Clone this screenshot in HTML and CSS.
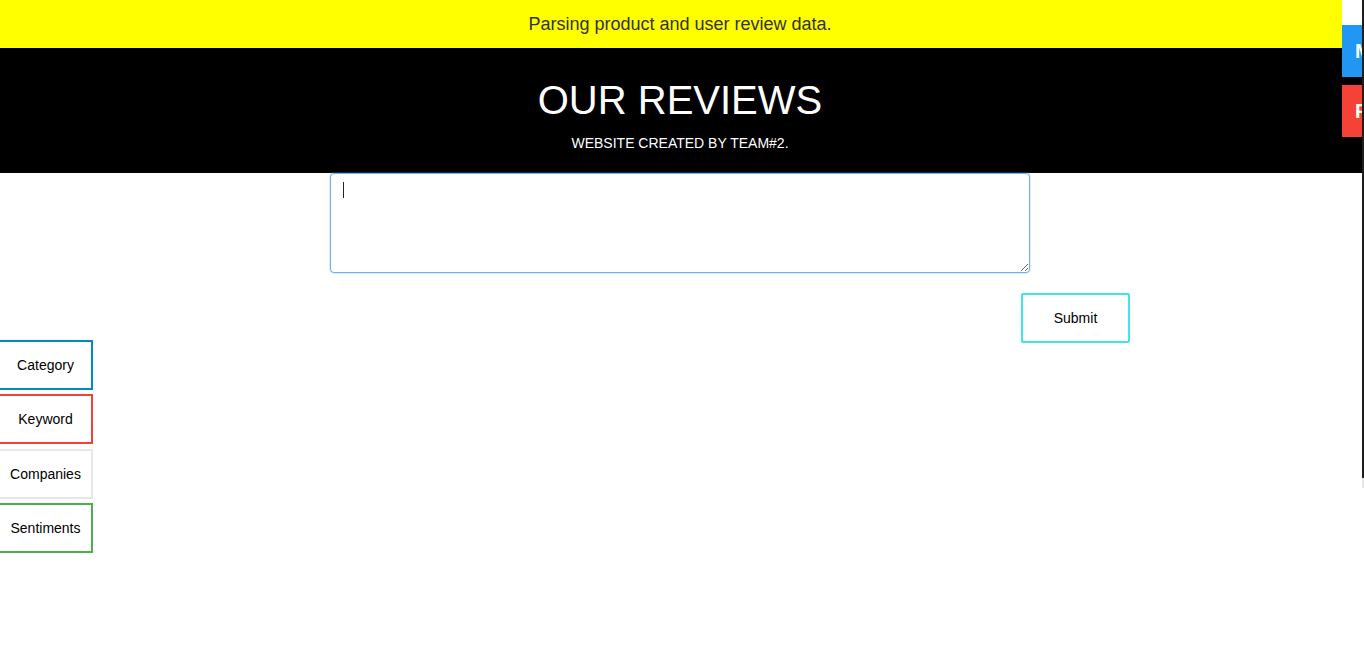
FILE: index.html
```html
<!DOCTYPE html>
<html>
<head>
<meta charset="utf-8">
<title>Our Reviews</title>
<link rel="stylesheet" href="styles.css">
</head>
<body>
<div class="page">
  <div class="banner">Parsing product and user review data.</div>
  <header class="header">
    <h1 class="title">OUR REVIEWS</h1>
    <p class="subtitle">WEBSITE CREATED BY TEAM#2.</p>
  </header>
  <div class="form">
    <div class="input-wrap">
      <textarea class="review-input"></textarea>
      <span class="caret"></span>
    </div>
    <div class="submit-row">
      <button class="submit">Submit</button>
    </div>
  </div>
  <nav class="filters">
    <button class="filter filter-category">Category</button>
    <button class="filter filter-keyword">Keyword</button>
    <button class="filter filter-companies">Companies</button>
    <button class="filter filter-sentiments">Sentiments</button>
  </nav>
</div>
<div class="side-tabs">
  <div class="side-cap"></div>
  <button class="tab tab-m">M</button>
  <button class="tab tab-f">F</button>
</div>
<div class="edge-line"></div>
<div class="edge-stub"></div>
</body>
</html>
```

FILE: styles.css
```css
html, body {
  margin: 0;
  padding: 0;
  background: #ffffff;
  overflow: hidden;
}

body {
  font-family: "Liberation Sans", Arial, sans-serif;
  width: 1364px;
  height: 652px;
  position: relative;
}

.page {
  width: 1360px;
}

.banner {
  height: 48px;
  margin-right: -2px;
  padding-right: 2px;
  background: #ffff00;
  color: #333333;
  font-size: 18px;
  display: flex;
  align-items: center;
  justify-content: center;
}

.header {
  background: #000000;
  color: #ffffff;
  height: 125px;
  box-sizing: border-box;
  margin-right: -2px;
  padding-right: 2px;
  padding-top: 29px;
  text-align: center;
}

.title {
  margin: 0;
  font-size: 40px;
  font-weight: normal;
  line-height: 46px;
}

.subtitle {
  margin: 12px 0 0;
  font-size: 14px;
  line-height: 16px;
}

.form {
  width: 700px;
  margin: 0 auto;
}

.input-wrap {
  position: relative;
  height: 100px;
}

.review-input {
  display: block;
  width: 700px;
  height: 100px;
  box-sizing: border-box;
  margin: 0;
  border: 1px solid #6fb0e6;
  border-radius: 4px;
  box-shadow: 0 0 0 1px rgba(120, 180, 230, 0.25);
  outline: none;
  resize: vertical;
  font-family: "Liberation Sans", Arial, sans-serif;
  font-size: 14px;
  padding: 8px 12px;
}

.caret {
  position: absolute;
  left: 13px;
  top: 9px;
  width: 1px;
  height: 16px;
  background: #222222;
}

.submit-row {
  margin-top: 20px;
  display: flex;
  justify-content: flex-end;
  margin-right: -100px;
}

.submit {
  width: 109px;
  height: 50px;
  box-sizing: border-box;
  border: 2px solid #40e6e6;
  border-radius: 2px;
  background: #ffffff;
  color: #000000;
  font-family: "Liberation Sans", Arial, sans-serif;
  font-size: 14px;
  padding: 0;
}

.filters {
  margin-top: -3px;
  display: flex;
  flex-direction: column;
  gap: 4.4px;
  margin-left: -2px;
  width: 95px;
}

.filter {
  width: 95px;
  height: 50px;
  box-sizing: border-box;
  background: #ffffff;
  color: #000000;
  font-family: "Liberation Sans", Arial, sans-serif;
  font-size: 14px;
  padding: 0;
  border: 2px solid #e7e7e7;
}

.filter-category { border-color: #008cba; }
.filter-keyword { border-color: #f44336; }
.filter-companies { border-color: #e7e7e7; }
.filter-sentiments { border-color: #4caf50; }

.side-tabs {
  position: absolute;
  top: 0;
  right: 2px;
  width: 20px;
  display: flex;
  flex-direction: column;
  gap: 8px;
  overflow: hidden;
}

.side-cap {
  height: 25px;
  margin-bottom: -8px;
  background: #ffffff;
}

.tab {
  width: 60px;
  height: 52px;
  border: none;
  color: #ffffff;
  font-family: "Liberation Sans", Arial, sans-serif;
  font-size: 20px;
  font-weight: bold;
  text-align: left;
  padding: 0 0 0 13px;
}

.tab-m { background: #2196f3; }
.tab-f { background: #f44336; }

.edge-line {
  position: absolute;
  top: 0;
  right: 0;
  width: 2px;
  height: 478px;
  background: #1e1e1e;
}

.edge-stub {
  position: absolute;
  top: 478px;
  right: 0;
  width: 2px;
  height: 10px;
  background: #e8e8e8;
}
```
